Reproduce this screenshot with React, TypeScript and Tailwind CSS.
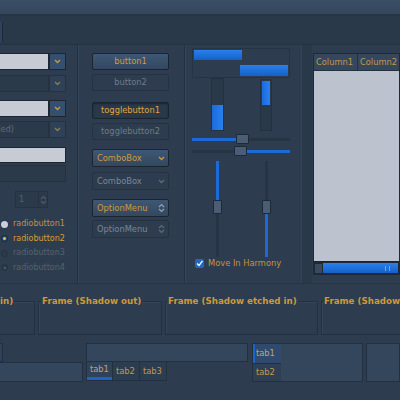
import type { ReactNode } from 'react'

const font = { fontFamily: '"DejaVu Sans", "Noto Sans", sans-serif' }

function Chevron({ color = '#c99a3e' }: { color?: string }) {
  return (
    <svg width="7" height="5" viewBox="0 0 7 5">
      <path d="M1 1 L3.5 3.5 L6 1" fill="none" stroke={color} strokeWidth="1.3" />
    </svg>
  )
}

function UpDown({ color = '#c99a3e' }: { color?: string }) {
  return (
    <svg width="7" height="10" viewBox="0 0 7 10">
      <path d="M1 4 L3.5 1.5 L6 4 M1 6 L3.5 8.5 L6 6" fill="none" stroke={color} strokeWidth="1.2" />
    </svg>
  )
}

function ComboEntry({ light, text }: { light?: boolean; text?: string }) {
  return (
    <div className="ml-[-30px] flex h-[17px] w-[96px]">
      <div
        className={
          light
            ? 'flex-1 border border-[#1c2733] bg-[#c6cbd4]'
            : 'flex flex-1 items-center border border-[#26323f] bg-[#2b3a4b] pl-[3px] text-[8px] text-[#5f6b78]'
        }
      >
        {text}
      </div>
      <div
        className={
          light
            ? 'flex w-[17px] items-center justify-center border border-[#1c2733] bg-[#34506e]'
            : 'flex w-[17px] items-center justify-center border border-[#26323f] bg-[#2f4157]'
        }
      >
        <Chevron color={light ? '#c99a3e' : '#8e7c4e'} />
      </div>
    </div>
  )
}

function Btn({
  children,
  kind,
  mt,
}: {
  children: ReactNode
  kind: 'normal' | 'disabled' | 'pressed'
  mt: string
}) {
  const cls =
    kind === 'normal'
      ? 'border-[#1b2530] bg-gradient-to-b from-[#3e5774] to-[#33485f] text-[#d39a3a]'
      : kind === 'pressed'
        ? 'border-[#1b2530] bg-[#2a394a] shadow-[inset_0_1px_2px_#1a2430] text-[#e0a43c]'
        : 'border-[#26323f] bg-[#2d3d4f] text-[#6f7b88]'
  return (
    <div
      className={`${mt} ml-[14px] flex h-[17px] w-[77px] items-center justify-center rounded-[2px] border text-[8.3px] ${cls}`}
    >
      {children}
    </div>
  )
}

function Combo({
  label,
  disabled,
  mt,
  option,
}: {
  label: string
  disabled?: boolean
  mt: string
  option?: boolean
}) {
  return (
    <div
      className={`${mt} ml-[14px] flex h-[18px] w-[77px] items-center rounded-[2px] border text-[8.3px] ${
        disabled
          ? 'border-[#26323f] bg-[#2d3d4f] text-[#7c8795]'
          : 'border-[#1b2530] bg-gradient-to-b from-[#3e5774] to-[#33485f] text-[#d39a3a]'
      }`}
    >
      <span className="flex-1 pl-[4px]">{label}</span>
      <span className="flex w-[14px] items-center justify-center">
        {option ? (
          <UpDown color={disabled ? '#5f6b78' : '#8fa0b4'} />
        ) : (
          <Chevron color={disabled ? '#5f6b78' : '#c99a3e'} />
        )}
      </span>
    </div>
  )
}

function Radio({ n, state }: { n: number; state: 'on' | 'dot' | 'off' | 'offdot' }) {
  const circle =
    state === 'on' ? (
      <span className="h-[7px] w-[7px] rounded-full bg-[#c9cfdb]" />
    ) : state === 'dot' ? (
      <span className="flex h-[7px] w-[7px] items-center justify-center rounded-full border border-[#1c2733] bg-[#2a4a7a]">
        <span className="h-[3px] w-[3px] rounded-full bg-[#b8d050]" />
      </span>
    ) : (
      <span className="flex h-[7px] w-[7px] items-center justify-center rounded-full border border-[#26323f] bg-[#2b3a4a]">
        {state === 'offdot' && <span className="h-[2px] w-[2px] rounded-full bg-[#58636f]" />}
      </span>
    )
  const color =
    state === 'on' ? 'text-[#c48f48]' : state === 'dot' ? 'text-[#d99e30]' : 'text-[#56616d]'
  return (
    <div className="flex h-[14.5px] items-center">
      <span className="ml-[1px] flex w-[12px]">{circle}</span>
      <span className={`text-[8px] ${color}`}>radiobutton{n}</span>
    </div>
  )
}

function Frame({
  label,
  w,
  labelLeft,
}: {
  label: string
  w: string
  labelLeft: string
}) {
  return (
    <div className={`relative ${w} mt-[17px] h-[34px] shrink-0 border border-[#223041] shadow-[inset_1px_1px_0_#344658]`}>
      <span
        className={`absolute top-[-7px] ${labelLeft} whitespace-nowrap bg-[#2d3d4f] px-[1px] text-[8.7px] font-bold text-[#cf983a]`}
      >
        {label}
      </span>
    </div>
  )
}

export default function App() {
  return (
    <div
      className="relative flex h-[400px] w-[400px] flex-col overflow-hidden bg-[#2d3d4f]"
      style={font}
    >
      {/* title / toolbar band */}
      <div className="h-[14px] shrink-0 bg-gradient-to-b from-[#3a4e66] to-[#33465c]" />
      <div className="flex h-[31px] shrink-0 border-t-2 border-b border-t-[#263444] border-b-[#243242] bg-[#2a394a] pt-[6px]">
        <div className="h-[20px] w-[3px] border-r border-[#1e2a37] bg-[#30425a]" />
      </div>

      {/* main widgets row */}
      <div className="flex h-[238px] shrink-0">
        {/* entries column */}
        <div className="w-[78px] shrink-0 border-r border-[#233040] shadow-[1px_0_0_#35475a]">
          <div className="mt-[8px]">
            <ComboEntry light />
          </div>
          <div className="mt-[5px]">
            <ComboEntry />
          </div>
          <div className="mt-[8px]">
            <ComboEntry light />
          </div>
          <div className="mt-[4px]">
            <ComboEntry text="(disabled)" />
          </div>
          <div className="ml-[-30px] mt-[9px] h-[16px] w-[96px] border border-[#1c2733] bg-[#c6cbd4]" />
          <div className="ml-[-30px] mt-[2px] h-[17px] w-[96px] border border-[#26323f] bg-[#2b3a4b]" />
          <div className="ml-[15px] mt-[9px] flex h-[17px] w-[33px] border border-[#26323f] bg-[#2b3a4b]">
            <span className="flex-1 pl-[3px] text-[8px] leading-[15px] text-[#56616d]">1</span>
            <span className="flex w-[9px] items-center justify-center border-l border-[#26323f]">
              <UpDown color="#4f5a66" />
            </span>
          </div>
          <div className="mt-[9px]">
            <Radio n={1} state="on" />
            <Radio n={2} state="dot" />
            <Radio n={3} state="off" />
            <Radio n={4} state="offdot" />
          </div>
        </div>

        {/* buttons column */}
        <div className="w-[107px] shrink-0 border-r border-[#233040] shadow-[1px_0_0_#35475a]">
          <Btn kind="normal" mt="mt-[8px]">
            button1
          </Btn>
          <Btn kind="disabled" mt="mt-[4px]">
            button2
          </Btn>
          <Btn kind="pressed" mt="mt-[11px]">
            togglebutton1
          </Btn>
          <Btn kind="disabled" mt="mt-[4px]">
            togglebutton2
          </Btn>
          <Combo label="ComboBox" mt="mt-[9px]" />
          <Combo label="ComboBox" disabled mt="mt-[5px]" />
          <Combo label="OptionMenu" option mt="mt-[9px]" />
          <Combo label="OptionMenu" option disabled mt="mt-[3px]" />
        </div>

        {/* range column */}
        <div className="ml-[7px] w-[98px] shrink-0">
          <div className="mt-[3px] flex h-[30px] flex-col justify-between border border-[#263444] p-[1px]">
            <div className="h-[10px] w-[48px] bg-gradient-to-b from-[#2a80ee] to-[#1560c8]" />
            <div className="ml-auto h-[11px] w-[48px] bg-gradient-to-b from-[#2a80ee] to-[#1560c8]" />
          </div>
          <div className="flex h-[54px]">
            <div className="ml-[19px] flex h-[53px] w-[13px] flex-col justify-end border border-[#243140] bg-[#2a3949]">
              <div className="h-[25px] bg-gradient-to-r from-[#1a6bdc] to-[#2a80ee]" />
            </div>
            <div className="ml-[36px] mt-[1px] h-[52px] w-[12px] border border-[#243140] bg-[#2a3949] p-[1px]">
              <div className="h-[24px] bg-gradient-to-r from-[#1a6bdc] to-[#2a80ee]" />
            </div>
          </div>
          {/* horizontal scales */}
          <div className="relative mt-[1px] h-[13px]">
            <div className="absolute left-0 right-0 top-[5px] h-[3px] bg-[#263444]" />
            <div className="absolute left-0 top-[5px] h-[3px] w-[46px] bg-[#1b6ad8]" />
            <div className="absolute left-[44px] top-[1px] h-[10px] w-[13px] rounded-[1px] border border-[#1e2936] bg-[#4a5d74]" />
          </div>
          <div className="relative h-[13px]">
            <div className="absolute left-0 right-0 top-[4px] h-[3px] bg-[#263444]" />
            <div className="absolute right-0 top-[4px] h-[3px] w-[44px] bg-[#1b6ad8]" />
            <div className="absolute left-[42px] top-0 h-[10px] w-[13px] rounded-[1px] border border-[#1e2936] bg-[#4a5d74]" />
          </div>
          {/* vertical scales */}
          <div className="relative h-[98px]">
            <div className="absolute left-[24px] top-[2px] h-[96px] w-[3px] bg-[#263444]" />
            <div className="absolute left-[24px] top-[2px] h-[44px] w-[3px] bg-[#1b6ad8]" />
            <div className="absolute left-[21px] top-[41px] h-[14px] w-[9px] rounded-[1px] border border-[#1e2936] bg-[#4a5d74]" />
            <div className="absolute left-[73px] top-[2px] h-[96px] w-[3px] bg-[#263444]" />
            <div className="absolute left-[73px] top-[55px] h-[43px] w-[3px] bg-[#1b6ad8]" />
            <div className="absolute left-[70px] top-[41px] h-[14px] w-[9px] rounded-[1px] border border-[#1e2936] bg-[#4a5d74]" />
          </div>
          <div className="ml-[3px] mt-[0px] flex items-center">
            <span className="flex h-[9px] w-[9px] items-center justify-center rounded-[2px] bg-[#2266c8]">
              <svg width="7" height="7" viewBox="0 0 7 7">
                <path d="M1 3.5 L3 5.5 L6.5 0.8" fill="none" stroke="#ffffff" strokeWidth="1.3" />
              </svg>
            </span>
            <span className="ml-[4px] text-[8.3px] text-[#c9923a]">Move In Harmony</span>
          </div>
        </div>

        {/* tree view column */}
        <div className="ml-[11px] w-[11px] shrink-0 border-l border-[#34465a] bg-[#2a394a]" />
        <div className="ml-[1px] mt-[8px] flex h-[222px] flex-1 flex-col border border-[#1e2a37] bg-[#2e3f52]">
          <div className="flex h-[16px] shrink-0 text-[8.3px] text-[#c6974a]">
            <div className="flex w-[44px] items-center border-r border-[#243142] bg-[#34475d] pl-[2px]">
              Column1
            </div>
            <div className="flex flex-1 items-center bg-[#34475d] pl-[2px]">Column2</div>
          </div>
          <div className="flex-1 border-t border-[#23303e] bg-[#bcc3ce]" />
          <div className="flex h-[13px] shrink-0 items-center border-t border-[#1a2430] bg-[#1f2a37] px-[1px]">
            <span className="h-[9px] w-[7px] bg-[#3a4a5c]" />
            <span className="ml-[1px] flex h-[10px] flex-1 items-center justify-end bg-gradient-to-b from-[#2a80ee] to-[#1560c8] pr-[8px]">
              <span className="h-[5px] w-[5px] border-x border-[#6fa8f0]" />
            </span>
          </div>
        </div>
      </div>

      {/* frames row */}
      <div className="h-[1px] shrink-0 bg-[#263444]" />
      <div className="flex h-[59px] shrink-0 gap-[3px]">
        <div className="ml-[-80px]">
          <Frame label="Frame (Shadow in)" w="w-[115px]" labelLeft="left-[-1px]" />
        </div>
        <Frame label="Frame (Shadow out)" w="w-[124px]" labelLeft="left-[2px]" />
        <Frame label="Frame (Shadow etched in)" w="w-[153px]" labelLeft="left-[1px]" />
        <Frame label="Frame (Shadow etched out)" w="w-[120px]" labelLeft="left-[1px]" />
      </div>

      {/* notebooks row */}
      <div className="flex h-[42px] shrink-0 text-[8.3px] text-[#c6974a]">
        <div className="ml-[-40px] flex w-[123px] shrink-0 flex-col">
          <div className="h-[19px] w-[43px] border border-[#223041] bg-[#30425a]" />
          <div className="h-[20px] border border-[#223041] bg-[#33465b]" />
        </div>
        <div className="ml-[3px] flex w-[162px] shrink-0 flex-col">
          <div className="h-[19px] border border-[#223041] bg-[#33465b]" />
          <div className="flex h-[19px]">
            <div className="flex w-[27px] flex-col border border-t-0 border-[#223041] bg-[#2f4257]">
              <span className="flex flex-1 items-center pl-[3px] text-[#c1a37a]">tab1</span>
              <span className="h-[3px] bg-[#1b63c8]" />
            </div>
            <div className="flex w-[27px] items-center border border-l-0 border-t-0 border-[#223041] bg-[#2d3d50] pl-[3px]">
              tab2
            </div>
            <div className="flex w-[27px] items-center border border-l-0 border-t-0 border-[#223041] bg-[#2d3d50] pl-[3px]">
              tab3
            </div>
          </div>
        </div>
        <div className="ml-[4px] flex h-[39px] w-[111px] shrink-0 border border-[#223041]">
          <div className="flex w-[28px] flex-col">
            <div className="flex h-[19px] items-center border-l-2 border-[#1b63c8] bg-[#2f4a6c] pl-[1px] text-[#bfa27c]">
              tab1
            </div>
            <div className="flex flex-1 items-center border-t border-[#223041] bg-[#2f4055] pl-[3px]">
              tab2
            </div>
          </div>
          <div className="flex-1 bg-[#33465b]" />
        </div>
        <div className="ml-[3px] h-[39px] flex-1 border border-[#223041] bg-[#33465b]" />
      </div>
    </div>
  )
}
